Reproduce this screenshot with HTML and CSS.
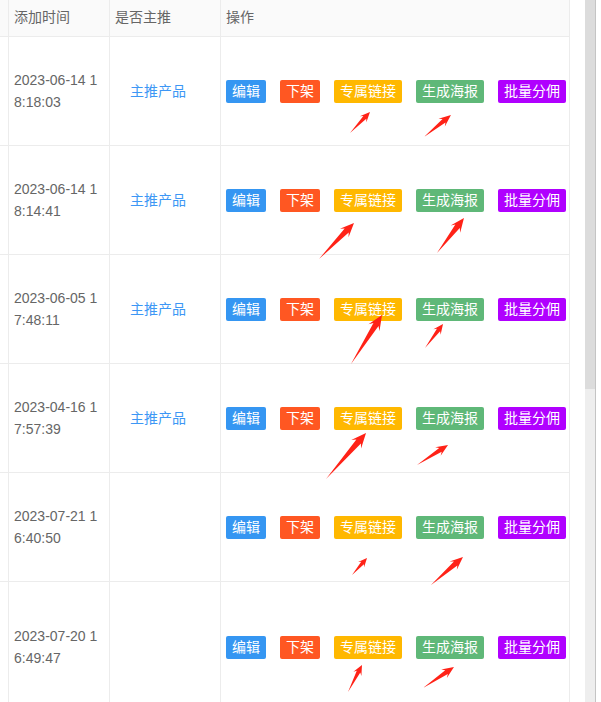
FILE: index.html
```html
<!DOCTYPE html>
<html lang="zh">
<head>
<meta charset="utf-8">
<link rel="stylesheet" href="styles.css">
</head>
<body>
<div class="page">
  <div class="grid">
    <div class="cell head"></div>
    <div class="cell head">添加时间</div>
    <div class="cell head">是否主推</div>
    <div class="cell head">操作</div>

    <div class="cell"></div>
    <div class="cell date">2023-06-14 18:18:03</div>
    <div class="cell main"><span class="tag">主推产品</span></div>
    <div class="cell ops"><span class="btn b-edit">编辑</span><span class="btn b-off">下架</span><span class="btn b-link">专属链接</span><span class="btn b-poster">生成海报</span><span class="btn b-comm">批量分佣</span></div>

    <div class="cell"></div>
    <div class="cell date">2023-06-14 18:14:41</div>
    <div class="cell main"><span class="tag">主推产品</span></div>
    <div class="cell ops"><span class="btn b-edit">编辑</span><span class="btn b-off">下架</span><span class="btn b-link">专属链接</span><span class="btn b-poster">生成海报</span><span class="btn b-comm">批量分佣</span></div>

    <div class="cell"></div>
    <div class="cell date">2023-06-05 17:48:11</div>
    <div class="cell main"><span class="tag">主推产品</span></div>
    <div class="cell ops"><span class="btn b-edit">编辑</span><span class="btn b-off">下架</span><span class="btn b-link">专属链接</span><span class="btn b-poster">生成海报</span><span class="btn b-comm">批量分佣</span></div>

    <div class="cell"></div>
    <div class="cell date">2023-04-16 17:57:39</div>
    <div class="cell main"><span class="tag">主推产品</span></div>
    <div class="cell ops"><span class="btn b-edit">编辑</span><span class="btn b-off">下架</span><span class="btn b-link">专属链接</span><span class="btn b-poster">生成海报</span><span class="btn b-comm">批量分佣</span></div>

    <div class="cell"></div>
    <div class="cell date">2023-07-21 16:40:50</div>
    <div class="cell main"></div>
    <div class="cell ops"><span class="btn b-edit">编辑</span><span class="btn b-off">下架</span><span class="btn b-link">专属链接</span><span class="btn b-poster">生成海报</span><span class="btn b-comm">批量分佣</span></div>

    <div class="cell"></div>
    <div class="cell date">2023-07-20 16:49:47</div>
    <div class="cell main"></div>
    <div class="cell ops"><span class="btn b-edit">编辑</span><span class="btn b-off">下架</span><span class="btn b-link">专属链接</span><span class="btn b-poster">生成海报</span><span class="btn b-comm">批量分佣</span></div>
  </div>
  <div class="scrollbar">
    <div class="thumb"></div>
    <div class="track"></div>
  </div>
</div>

<svg class="arrows" width="601" height="702" viewBox="0 0 601 702" xmlns="http://www.w3.org/2000/svg">
  <g fill="#ff2217">
    <polygon transform="translate(350,133) rotate(-46.4)" points="0,0 21.5,-2 19,-4.5 29,0 19,4.5 21.5,2"/>
    <polygon transform="translate(424,137) rotate(-39.2)" points="0,0 25.8,-2.3 22.8,-5 34.8,0 22.8,5 25.8,2.3"/>
    <polygon transform="translate(319,259) rotate(-45.8)" points="0,0 39.7,-2.8 36.2,-6 50.2,0 36.2,6 39.7,2.8"/>
    <polygon transform="translate(437,253) rotate(-52.4)" points="0,0 33.7,-2.8 30.2,-6 44.2,0 30.2,6 33.7,2.8"/>
    <polygon transform="translate(351,364) rotate(-57.7)" points="0,0 46.75,-3 43,-6.5 58,0 43,6.5 46.75,3"/>
    <polygon transform="translate(425,348) rotate(-53.1)" points="0,0 22.5,-2 20,-4.5 30,0 20,4.5 22.5,2"/>
    <polygon transform="translate(326,479) rotate(-49)" points="0,0 49.75,-3 46,-6.5 61,0 46,6.5 49.75,3"/>
    <polygon transform="translate(417,465) rotate(-32.8)" points="0,0 27.9,-2.3 24.9,-5 36.9,0 24.9,5 27.9,2.3"/>
    <polygon transform="translate(352,575) rotate(-48.6)" points="0,0 15.95,-1.8 13.7,-4 22.7,0 13.7,4 15.95,1.8"/>
    <polygon transform="translate(431,585) rotate(-41.2)" points="0,0 32.75,-2.6 29.5,-5.5 42.5,0 29.5,5.5 32.75,2.6"/>
    <polygon transform="translate(348,692) rotate(-62.6)" points="0,0 22.9,-2 20.4,-4.5 30.4,0 20.4,4.5 22.9,2"/>
    <polygon transform="translate(423,688) rotate(-34.1)" points="0,0 28.4,-2.3 25.4,-5 37.4,0 25.4,5 28.4,2.3"/>
  </g>
</svg>
</body>
</html>
```
FILE: styles.css
```css
html, body {
  margin: 0;
  padding: 0;
  background: #ffffff;
}
body {
  position: relative;
  width: 601px;
  height: 702px;
  overflow: hidden;
  font-family: "Liberation Sans", "Noto Sans CJK SC", sans-serif;
  font-size: 14px;
  color: #666666;
}
.page {
  display: flex;
  align-items: flex-start;
  width: 601px;
  height: 702px;
}
.grid {
  display: grid;
  grid-template-columns: 9px 101px 111px 349px;
  grid-template-rows: 37px repeat(5, 109px) 131px;
  width: 570px;
  flex: none;
}
.cell {
  box-sizing: border-box;
  border-right: 1px solid #ececec;
  border-bottom: 1px solid #ececec;
  padding: 0 5px;
  display: flex;
  align-items: center;
}
.grid > .cell:nth-child(4n+1) {
  padding: 0;
}
.head {
  background: #fafafa;
  color: #666666;
  line-height: 20px;
  padding-bottom: 3px;
}
.date {
  word-break: break-all;
  line-height: 22px;
  color: #666666;
}
.main {
  padding-left: 20px;
}
.tag {
  color: #3d97f5;
  line-height: 20px;
}
.ops {
  gap: 14px;
}
.btn {
  display: block;
  height: 23px;
  line-height: 23px;
  padding: 0 6px;
  border-radius: 2px;
  color: #ffffff;
  font-size: 14px;
  white-space: nowrap;
}
.b-edit { background: #3596f2; }
.b-off { background: #ff5722; }
.b-link { background: #ffb800; }
.b-poster { background: #5fb878; }
.b-comm { background: #b000ff; }
.scrollbar {
  margin-left: 15px;
  width: 10px;
  height: 702px;
  border-right: 1px solid #c4c4c4;
  display: flex;
  flex-direction: column;
  flex: none;
}
.thumb {
  height: 389px;
  background: #dcdcdc;
}
.track {
  flex: 1;
  background: #eeeeee;
}
.arrows {
  position: absolute;
  left: 0;
  top: 0;
  pointer-events: none;
}
```
